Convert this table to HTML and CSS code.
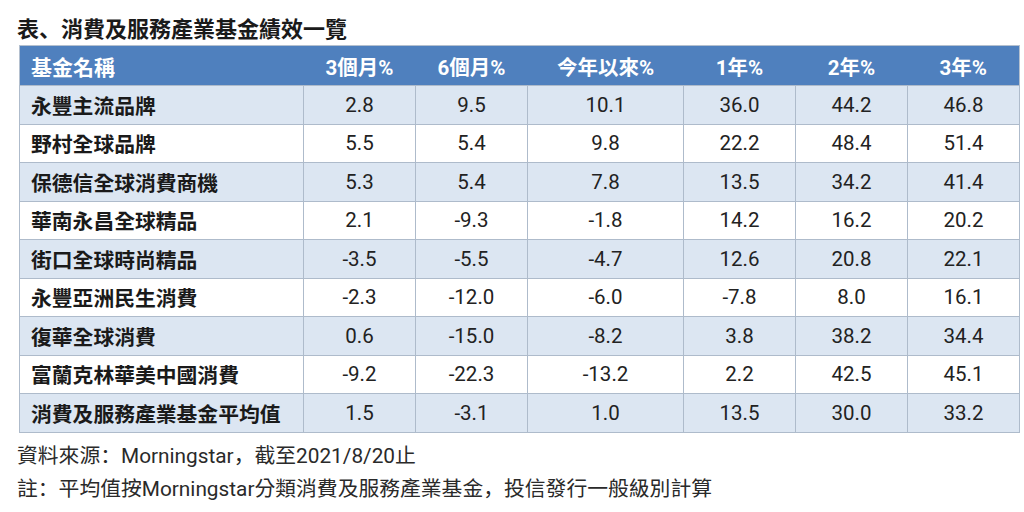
FILE: index.html
```html
<!DOCTYPE html>
<html lang="zh-Hant">
<head>
<meta charset="utf-8">
<link rel="stylesheet" href="styles.css">
</head>
<body>
<div class="page">
  <h1 class="title">表<span class="pn" lang="zh-Hans">、</span>消費及服務產業基金績效一覽</h1>
  <table class="perf">
    <colgroup>
      <col class="c-name"><col class="c-n"><col class="c-n"><col class="c-w"><col class="c-n"><col class="c-n"><col class="c-n">
    </colgroup>
    <thead>
      <tr><th class="name">基金名稱</th><th>3個月%</th><th>6個月%</th><th>今年以來%</th><th>1年%</th><th>2年%</th><th>3年%</th></tr>
    </thead>
    <tbody>
      <tr class="alt"><td class="name">永豐主流品牌</td><td>2.8</td><td>9.5</td><td>10.1</td><td>36.0</td><td>44.2</td><td>46.8</td></tr>
      <tr><td class="name">野村全球品牌</td><td>5.5</td><td>5.4</td><td>9.8</td><td>22.2</td><td>48.4</td><td>51.4</td></tr>
      <tr class="alt"><td class="name">保德信全球消費商機</td><td>5.3</td><td>5.4</td><td>7.8</td><td>13.5</td><td>34.2</td><td>41.4</td></tr>
      <tr><td class="name">華南永昌全球精品</td><td>2.1</td><td>-9.3</td><td>-1.8</td><td>14.2</td><td>16.2</td><td>20.2</td></tr>
      <tr class="alt"><td class="name">街口全球時尚精品</td><td>-3.5</td><td>-5.5</td><td>-4.7</td><td>12.6</td><td>20.8</td><td>22.1</td></tr>
      <tr><td class="name">永豐亞洲民生消費</td><td>-2.3</td><td>-12.0</td><td>-6.0</td><td>-7.8</td><td>8.0</td><td>16.1</td></tr>
      <tr class="alt"><td class="name">復華全球消費</td><td>0.6</td><td>-15.0</td><td>-8.2</td><td>3.8</td><td>38.2</td><td>34.4</td></tr>
      <tr><td class="name">富蘭克林華美中國消費</td><td>-9.2</td><td>-22.3</td><td>-13.2</td><td>2.2</td><td>42.5</td><td>45.1</td></tr>
      <tr class="alt"><td class="name">消費及服務產業基金平均值</td><td>1.5</td><td>-3.1</td><td>1.0</td><td>13.5</td><td>30.0</td><td>33.2</td></tr>
    </tbody>
  </table>
  <p class="note">資料來源<span class="pn" lang="zh-Hans">：</span>Morningstar<span class="pn" lang="zh-Hans">，</span>截至2021/8/20止</p>
  <p class="note">註<span class="pn" lang="zh-Hans">：</span>平均值按Morningstar分類消費及服務產業基金<span class="pn" lang="zh-Hans">，</span>投信發行一般級別計算</p>
</div>
</body>
</html>
```

FILE: styles.css
```css
html, body {
  margin: 0;
  padding: 0;
  background: #ffffff;
}
body {
  font-family: Roboto, "Noto Sans CJK TC", sans-serif;
  color: #1c1c1c;
}
.page {
  padding: 12px 7px 0 19px;
}
.title {
  margin: 0 0 3px -2px;
  font-family: "Noto Sans CJK TC", sans-serif;
  font-size: 22px;
  font-weight: 700;
  line-height: 30px;
  color: #1a1a1a;
}
.pn {
  font-family: "Noto Sans CJK SC", sans-serif;
}
.perf {
  width: 998px;
  border-collapse: collapse;
  table-layout: fixed;
  border: 1px solid #b4c0cf;
}
.c-name { width: 284px; }
.c-n { width: 112px; }
.c-w { width: 156px; }
.perf th {
  background: #4f80be;
  color: #ffffff;
  font-family: Roboto, "Noto Sans CJK TC", sans-serif;
  font-weight: 700;
  font-size: 20.5px;
  height: 39px;
  padding: 0;
  text-align: center;
  border: none;
}
.perf th.name {
  text-align: left;
  padding-left: 11px;
  font-size: 21px;
}
.perf td {
  height: 37.5px;
  padding: 0;
  text-align: center;
  font-size: 20.5px;
  border: 1px solid #aebbcb;
  color: #222222;
}
.perf td.name {
  text-align: left;
  padding-left: 11px;
  font-family: "Noto Sans CJK TC", sans-serif;
  font-weight: 700;
  font-size: 20.8px;
  color: #1a1a1a;
}
.perf tr.alt td {
  background: #dce6f2;
}
.note {
  margin: 0 0 0 -2px;
  font-family: Roboto, "Noto Sans CJK TC", sans-serif;
  font-size: 20.8px;
  line-height: 31px;
  color: #2a2a2a;
}
.perf + .note {
  margin-top: 6px;
}
```
